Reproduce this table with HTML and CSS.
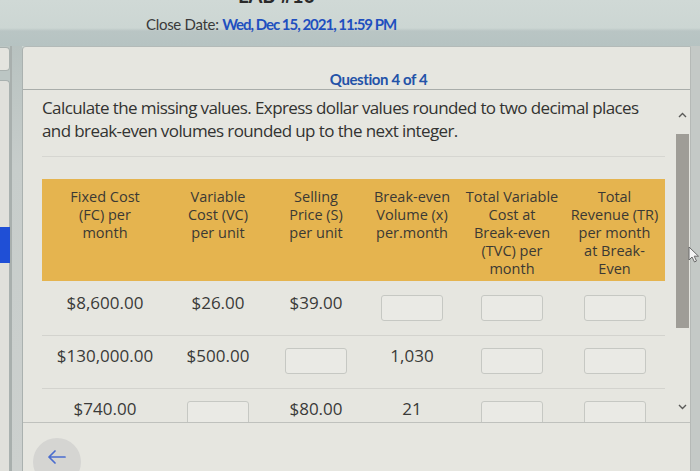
FILE: index.html
```html
<!DOCTYPE html>
<html>
<head>
<meta charset="utf-8">
<link rel="stylesheet" href="styles.css">
</head>
<body>
<div class="page">
  <header class="top">
    <div class="title">LAB #10</div>
    <div class="close">Close Date: <span class="date">Wed, Dec 15, 2021, 11:59 PM</span></div>
  </header>
  <div class="main">
    <div class="tabs">
      <div class="tab"></div>
      <div class="tab tab-long"><div class="marker"></div></div>
    </div>
    <div class="rail"></div>
    <div class="panel">
      <div class="qhead">Question 4 of 4</div>
      <div class="qbody">
        <div class="content">
          <p class="prompt">Calculate the missing values. Express dollar values rounded to two decimal places<br>and break-even volumes rounded up to the next integer.</p>
          <div class="rule"></div>
          <div class="grid head">
            <div>Fixed Cost<br>(FC) per<br>month</div>
            <div>Variable<br>Cost (VC)<br>per unit</div>
            <div>Selling<br>Price (S)<br>per unit</div>
            <div>Break-even<br>Volume (x)<br>per.month</div>
            <div>Total Variable<br>Cost at<br>Break-even<br>(TVC) per<br>month</div>
            <div>Total<br>Revenue (TR)<br>per month<br>at Break-<br>Even</div>
          </div>
          <div class="grid row first">
            <div>$8,600.00</div>
            <div>$26.00</div>
            <div>$39.00</div>
            <div><input class="box" type="text"></div>
            <div><input class="box" type="text"></div>
            <div><input class="box" type="text"></div>
          </div>
          <div class="grid row">
            <div>$130,000.00</div>
            <div>$500.00</div>
            <div><input class="box" type="text"></div>
            <div>1,030</div>
            <div><input class="box" type="text"></div>
            <div><input class="box" type="text"></div>
          </div>
          <div class="grid row">
            <div>$740.00</div>
            <div><input class="box" type="text"></div>
            <div>$80.00</div>
            <div>21</div>
            <div><input class="box" type="text"></div>
            <div><input class="box" type="text"></div>
          </div>
        </div>
        <div class="scroll">
          <svg class="caret" width="9" height="6" viewBox="0 0 9 6"><polyline points="1,5 4.5,1.5 8,5" fill="none" stroke="#5a5a58" stroke-width="1.4"/></svg>
          <div class="thumb"></div>
          <svg class="caret down" width="9" height="6" viewBox="0 0 9 6"><polyline points="1,1 4.5,4.5 8,1" fill="none" stroke="#5a5a58" stroke-width="1.4"/></svg>
        </div>
        <svg class="cursor" width="12" height="17" viewBox="0 0 12 17"><polygon points="1,1 1,14 4,11 6.5,16 8.5,15 6.2,10.2 10.5,10.2" fill="#f4f4f4" stroke="#6a6a6a" stroke-width="1"/></svg>
      </div>
      <div class="footer">
        <button class="back" type="button">
          <svg width="20" height="14" viewBox="0 0 20 14"><path d="M18 7H2M8 1L2 7l6 6" fill="none" stroke="#4a6ccf" stroke-width="1.7" stroke-linecap="round" stroke-linejoin="round"/></svg>
        </button>
      </div>
    </div>
    <div class="edge"></div>
  </div>
</div>
</body>
</html>
```
FILE: styles.css
```css
html, body {
  margin: 0;
  padding: 0;
}
body {
  width: 700px;
  height: 471px;
  overflow: hidden;
  background: #cbd5d2;
}
.page {
  width: 700px;
  height: 471px;
  display: flex;
  flex-direction: column;
}
.top {
  height: 46px;
  flex: none;
  overflow: hidden;
  background: linear-gradient(to bottom, #d0d9d6 0, #ccd6d3 28px, #b9c5c4 31px, #b6c3c2 46px);
}
.title {
  font-family: Lato, "Liberation Sans", sans-serif;
  font-weight: 700;
  font-size: 20px;
  line-height: 20px;
  margin-top: -15px;
  padding-left: 238px;
  color: #2a2a2a;
}
.close {
  margin-top: 9px;
  padding-left: 146px;
  font-family: Lato, "Liberation Sans", sans-serif;
  font-size: 15px;
  line-height: 20px;
  letter-spacing: -0.3px;
  color: #3a3a3a;
}
.date {
  font-weight: 700;
  letter-spacing: -1px;
  color: #1f4fbf;
}
.main {
  flex: 1;
  display: flex;
  min-height: 0;
}
.tabs {
  width: 10px;
  flex: none;
  display: flex;
  flex-direction: column;
  gap: 9px;
  padding-top: 1px;
  background: #bcc6c4;
}
.tab {
  height: 22px;
  background: #e4e4df;
  border: 1px solid #a9b1af;
  border-left: none;
  border-radius: 0 4px 4px 0;
}
.tab-long {
  flex: 1;
  padding-top: 146px;
  border-bottom: none;
  border-radius: 0 4px 0 0;
  background: #e0e0db;
}
.marker {
  height: 36px;
  width: 10px;
  background: #1f4fd6;
}
.rail {
  width: 10px;
  flex: none;
  background: linear-gradient(to bottom, #b8c2c0 0, #c7cdcb 120px, #ccd0ce 100%);
  border-left: 2px solid #a8afad;
}
.panel {
  flex: 1;
  display: flex;
  flex-direction: column;
  background: #e6e6e0;
  border-top: 1px solid #b3bab8;
  border-left: 1px solid #aab1af;
  border-right: 1px solid #b5b9b6;
  border-radius: 4px 0 0 0;
  min-width: 0;
}
.qhead {
  height: 42px;
  flex: none;
  display: flex;
  align-items: flex-end;
  justify-content: center;
  padding-left: 44px;
  font-family: Lato, "Liberation Sans", sans-serif;
  font-weight: 700;
  font-size: 15px;
  line-height: 20px;
  letter-spacing: -0.4px;
  color: #2352a8;
  border-bottom: 1px solid #a9adaa;
}
.qbody {
  height: 332px;
  flex: none;
  display: flex;
  position: relative;
  border-bottom: 1px solid #bfc1bd;
}
.content {
  flex: 1;
  overflow: hidden;
  padding: 6px 0 0 19px;
  font-family: "Open Sans", "Liberation Sans", sans-serif;
  color: #363634;
}
.prompt {
  margin: 0;
  font-size: 17px;
  line-height: 23px;
  letter-spacing: -0.6px;
  white-space: nowrap;
  color: #333331;
}
.rule {
  width: 623px;
  height: 1px;
  margin-top: 14px;
  background: #d6d6d1;
}
.grid {
  display: grid;
  grid-template-columns: 126px 100px 96px 96px 104px 101px;
  width: 623px;
  text-align: center;
}
.head {
  margin-top: 22px;
  padding: 9px 0 3px;
  background: #e5b44f;
  font-size: 14.5px;
  line-height: 18px;
  white-space: nowrap;
  color: #3b3934;
}
.row {
  height: 53px;
  box-sizing: border-box;
  padding-top: 9px;
  border-bottom: 1px solid #d3d3ce;
  font-size: 17px;
  line-height: 22px;
  align-items: start;
  color: #3a3a38;
}
.row.first {
  margin-top: 2px;
}
.box {
  display: block;
  box-sizing: border-box;
  width: 62px;
  height: 26px;
  margin: 3px auto 0;
  padding: 0;
  border: 1px solid #c6c8c3;
  border-radius: 3px;
  background: #eaeae5;
}
.scroll {
  width: 16px;
  flex: none;
  display: flex;
  flex-direction: column;
  align-items: center;
  padding-top: 22px;
}
.caret {
  display: block;
}
.thumb {
  width: 13px;
  height: 194px;
  margin-top: 16px;
  background: #9f9d97;
}
.caret.down {
  margin-top: 76px;
}
.cursor {
  position: absolute;
  right: -10px;
  top: 156px;
}
.footer {
  flex: 1;
  padding: 15px 0 0 10px;
  overflow: hidden;
}
.back {
  width: 48px;
  height: 48px;
  border-radius: 50%;
  border: none;
  padding: 0 0 10px;
  background: #d5d5d2;
  display: flex;
  align-items: center;
  justify-content: center;
}
.edge {
  width: 9px;
  flex: none;
  background: #c4c9c6;
}
```
